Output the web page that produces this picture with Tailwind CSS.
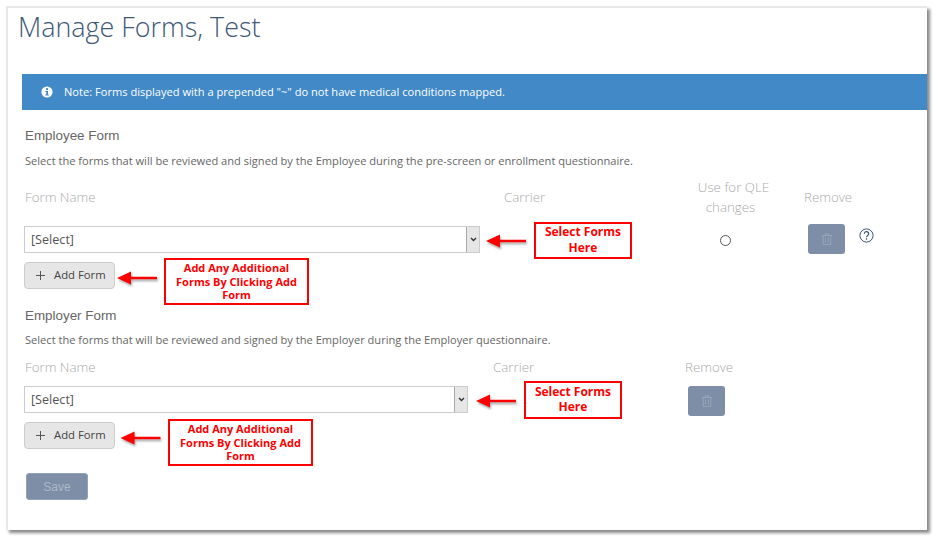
<!DOCTYPE html>
<html lang="en">
<head>
    <meta charset="UTF-8">
    <title>Manage Forms</title>
    <script src="https://cdn.jsdelivr.net/npm/@tailwindcss/browser@4"></script>
</head>
<body class="bg-white font-['Open_Sans',sans-serif] overflow-hidden">
    <div class="relative w-[938px] h-[541px] pt-[6px] pl-[6px]">
        <!-- card -->
        <div class="w-[921px] h-[524px] bg-white border-l-2 border-t-2 border-[#e8e8e8] shadow-[3px_3px_3px_#8a8a8a]">
            <h1 class="ml-[10px] h-[66px] text-[26.9px] leading-[38px] font-light text-[#3e5875]">Manage Forms, Test</h1>

            <div class="ml-[14px] h-[36px] bg-[#4189c7] flex items-center text-white text-[11.1px]">
                <svg class="ml-[19px] w-[12px] h-[12px]" viewBox="0 0 12 12"><circle cx="6" cy="6" r="5.6" fill="#fff"/><rect x="5" y="2.2" width="2" height="1.8" fill="#4189c7"/><path d="M4.3 5h2.7v3.6h.8v1H4.3v-1h.9V6h-.9z" fill="#4189c7"/></svg>
                <span class="ml-[11px]">Note: Forms displayed with a prepended "~" do not have medical conditions mapped.</span>
            </div>

            <!-- employee form -->
            <div class="pl-[16px]">
                <h2 class="mt-[18px] ml-[1px] font-['Liberation_Sans',sans-serif] text-[13.4px] leading-[16px] text-[#666]">Employee Form</h2>
                <p class="mt-[9px] ml-[1px] text-[11.1px] leading-[16px] text-[#666]">Select the forms that will be reviewed and signed by the Employee during the pre-screen or enrollment questionnaire.</p>
                <div class="flex items-center h-[42px] mt-[7px] text-[13.3px] leading-[20px] font-light text-[#aaa]">
                    <span class="ml-[1px] w-[479px]">Form Name</span>
                    <span class="w-[180px]">Carrier</span>
                    <span class="w-[121px] -ml-[14px] text-center"><span class="block pl-[6px]">Use for QLE</span>changes</span>
                    <span class="ml-[13px]">Remove</span>
                </div>
                <div class="flex mt-[6px] h-[30px]">
                    <div class="flex w-[456px] h-[27px] mt-[2px] border border-[#ccc] bg-white">
                        <span class="flex-1 pl-[6px] text-[12.6px] leading-[25px] text-[#555]">[Select]</span>
                        <span class="w-[13px] flex items-center justify-center bg-[#e6e6e6] border-l border-[#aaa]">
                            <svg class="w-[7px] h-[5px]" viewBox="0 0 7 5"><path d="M1 1l2.5 2.5L6 1" fill="none" stroke="#333" stroke-width="1.4"/></svg>
                        </span>
                    </div>
                    <span class="ml-[240px] mt-[11px] w-[11px] h-[11px] rounded-full border border-[#555]"></span>
                    <button class="ml-[77px] w-[37px] h-[30px] rounded-[3px] bg-[#7d8ea6] flex items-center justify-center">
                        <svg class="w-[10px] h-[12px]" viewBox="0 0 10 12" fill="none" stroke="#98a5b8" stroke-width="1"><path d="M0 2.5h10M3.3 2.5V.8h3.4v1.7M1.2 2.5v9h7.6v-9M3.6 4.5v5M6.4 4.5v5"/></svg>
                    </button>
                    <svg class="ml-[14px] w-[15px] h-[15px] mt-[4px]" viewBox="0 0 15 15" fill="none" stroke="#3e5875"><circle cx="7.5" cy="7.5" r="6.6"/><path d="M5.3 5.8c0-3 4.4-2.8 4.4-.1 0 1.700-2.200 1.800-2.200 3.600" stroke-width="1.200"/><path d="M7.500 10.300v1.400" stroke-width="1.300"/></svg>
                </div>
                <button class="flex items-center mt-[8px] w-[91px] h-[27px] rounded-[4px] bg-[#e6e6e6] border border-[#ccc] text-[11.3px] text-[#444]">
                    <svg class="ml-[11px] w-[9px] h-[9px]" viewBox="0 0 9 9"><path d="M4.500 0v9M0 4.500h9" stroke="#555" stroke-width="1"/></svg>
                    <span class="ml-[9px]">Add Form</span>
                </button>

                <!-- employer form -->
                <h2 class="mt-[19px] ml-[1px] font-['Liberation_Sans',sans-serif] text-[13.4px] leading-[16px] text-[#666]">Employer Form</h2>
                <p class="mt-[8px] ml-[1px] text-[11.1px] leading-[16px] text-[#666]">Select the forms that will be reviewed and signed by the Employer during the Employer questionnaire.</p>
                <div class="flex items-center h-[20px] mt-[9px] text-[13.3px] leading-[20px] font-light text-[#aaa]">
                    <span class="ml-[1px] w-[468px]">Form Name</span>
                    <span class="w-[192px]">Carrier</span>
                    <span>Remove</span>
                </div>
                <div class="flex mt-[8px] h-[30px]">
                    <div class="flex w-[444px] h-[27px] mt-[1px] border border-[#ccc] bg-white">
                        <span class="flex-1 pl-[6px] text-[12.6px] leading-[25px] text-[#555]">[Select]</span>
                        <span class="w-[13px] flex items-center justify-center bg-[#e6e6e6] border-l border-[#aaa]">
                            <svg class="w-[7px] h-[5px]" viewBox="0 0 7 5"><path d="M1 1l2.5 2.5L6 1" fill="none" stroke="#333" stroke-width="1.4"/></svg>
                        </span>
                    </div>
                    <button class="ml-[220px] mt-[1px] w-[37px] h-[30px] rounded-[3px] bg-[#7d8ea6] flex items-center justify-center">
                        <svg class="w-[10px] h-[12px]" viewBox="0 0 10 12" fill="none" stroke="#98a5b8" stroke-width="1"><path d="M0 2.5h10M3.3 2.5V.8h3.4v1.7M1.2 2.5v9h7.6v-9M3.6 4.5v5M6.4 4.5v5"/></svg>
                    </button>
                </div>
                <button class="flex items-center mt-[7px] w-[91px] h-[27px] rounded-[4px] bg-[#e6e6e6] border border-[#ccc] text-[11.3px] text-[#444]">
                    <svg class="ml-[11px] w-[9px] h-[9px]" viewBox="0 0 9 9"><path d="M4.500 0v9M0 4.500h9" stroke="#555" stroke-width="1"/></svg>
                    <span class="ml-[9px]">Add Form</span>
                </button>
                <button class="block mt-[24px] ml-[2px] w-[62px] h-[27px] rounded-[3px] bg-[#7d8ea6] border border-[#8fa3bd] font-['Liberation_Sans',sans-serif] text-[12px] text-[#adb8c8]">Save</button>
            </div>
        </div>

        <!-- red annotations laid over the page -->
        <div class="absolute left-[534px] top-[222px] w-[98px] h-[37px] border-2 border-[#f00] bg-white flex items-center justify-center text-center text-[#f00] font-bold text-[12px] leading-[15.5px] pb-[2px]">Select Forms<br>Here</div>
        <div class="absolute left-[164px] top-[258px] w-[145px] h-[47px] border-2 border-[#f00] bg-white flex items-center justify-center text-center text-[#f00] font-bold text-[11px] leading-[13.500px]">Add Any Additional<br>Forms By Clicking Add<br>Form</div>
        <div class="absolute left-[524px] top-[381px] w-[98px] h-[38px] border-2 border-[#f00] bg-white flex items-center justify-center text-center text-[#f00] font-bold text-[12px] leading-[15.5px] pb-[2px]">Select Forms<br>Here</div>
        <div class="absolute left-[168px] top-[419px] w-[145px] h-[47px] border-2 border-[#f00] bg-white flex items-center justify-center text-center text-[#f00] font-bold text-[11px] leading-[13.500px]">Add Any Additional<br>Forms By Clicking Add<br>Form</div>

        <svg class="absolute left-[486px] top-[233px] w-[40px] h-[16px] drop-shadow-[1px_2px_1px_rgba(0,0,0,0.35)]" viewBox="0 0 40 16"><path d="M0 8L14 1.500V6.800H40V9.200H14V14.500z" fill="#f00"/></svg>
        <svg class="absolute left-[117px] top-[270px] w-[40px] h-[16px] drop-shadow-[1px_2px_1px_rgba(0,0,0,0.35)]" viewBox="0 0 40 16"><path d="M0 8L14 1.500V6.800H40V9.200H14V14.500z" fill="#f00"/></svg>
        <svg class="absolute left-[476px] top-[393px] w-[40px] h-[16px] drop-shadow-[1px_2px_1px_rgba(0,0,0,0.35)]" viewBox="0 0 40 16"><path d="M0 8L14 1.500V6.800H40V9.200H14V14.500z" fill="#f00"/></svg>
        <svg class="absolute left-[120px] top-[430px] w-[41px] h-[16px] drop-shadow-[1px_2px_1px_rgba(0,0,0,0.35)]" viewBox="0 0 40 16"><path d="M0 8L14 1.500V6.800H40V9.200H14V14.500z" fill="#f00"/></svg>
    </div>
</body>
</html>
